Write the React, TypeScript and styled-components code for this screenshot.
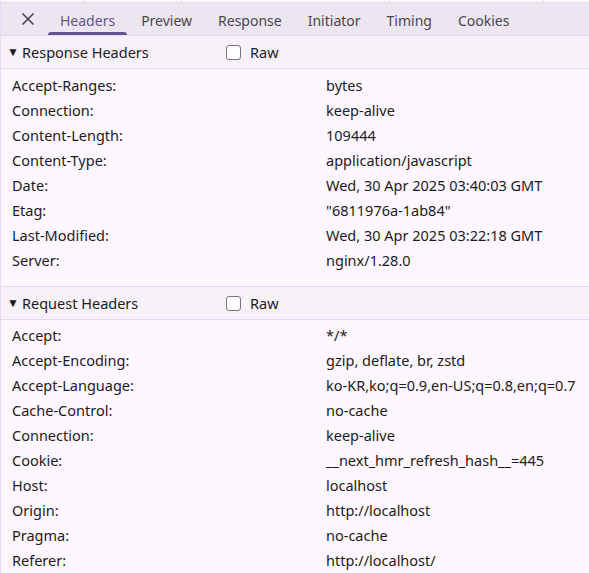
import React from "react";
import styled, {createGlobalStyle} from "styled-components";

const GlobalStyle = createGlobalStyle`
    html, body {
        margin: 0;
        padding: 0;
        background: #fef7ff;
    }
    body {
        font-family: "Noto Sans", "Open Sans", sans-serif;
        color: #1d1b20;
    }
`;

const Panel = styled.main`
    width: 589px;
    height: 573px;
    overflow: hidden;
    background: #fef7ff;
    border-left: 1px solid #e6dcf7;
    box-sizing: border-box;
`;

const TopStrip = styled.div`
    height: 2px;
    display: flex;
    border-bottom: 1px solid #e3d9f5;
    background: #fef7ff;
`;

const StripCell = styled.div<{ $w: number }>`
    width: ${p => p.$w}px;
    border-right: 1px solid #e3d9f5;
    flex-shrink: 0;
`;

const TabBar = styled.nav`
    height: 32px;
    display: flex;
    align-items: stretch;
    background: #ece6f0;
    border-bottom: 1px solid #e3d9f5;
    padding-left: 18px;
`;

const CloseButton = styled.button`
    width: 18px;
    border: none;
    background: none;
    padding: 0;
    margin-right: 10px;
    display: flex;
    align-items: center;
    justify-content: center;
    color: #49454f;
    cursor: pointer;
`;

const Tab = styled.div<{ $active?: boolean }>`
    position: relative;
    padding: 3px 13px 0;
    display: flex;
    align-items: center;
    font-size: 14px;
    color: ${p => p.$active ? "#65558f" : "#49454f"};

    &::after {
        content: "";
        display: ${p => p.$active ? "block" : "none"};
        position: absolute;
        left: 1px;
        right: 1px;
        bottom: 0;
        height: 3px;
        border-radius: 3px 3px 0 0;
        background: #65558f;
    }
`;

const SectionHeader = styled.div`
    height: 32px;
    display: flex;
    align-items: center;
    background: #f7f2fa;
    border-bottom: 1px solid #e3d9f5;
    padding-left: 6px;
    font-size: 14.5px;
`;

const SectionTitle = styled.div`
    width: 219px;
    display: flex;
    align-items: center;
    gap: 3px;
`;

const Arrow = styled.span`
    font-size: 12px;
    width: 12px;
    line-height: 1;
`;

const RawToggle = styled.label`
    display: flex;
    align-items: center;
    gap: 9px;
`;

const Box = styled.span`
    width: 13px;
    height: 13px;
    border: 1px solid #767676;
    border-radius: 3px;
    background: #fff;
`;

const Rows = styled.div<{ $top: number; $bottom: number }>`
    padding: ${p => p.$top}px 0 ${p => p.$bottom}px;
    border-bottom: 1px solid #e3d9f5;
`;

const Row = styled.div`
    height: 25px;
    display: grid;
    grid-template-columns: 315px 1fr;
    align-items: center;
    padding-left: 11px;
    font-size: 14.5px;
    white-space: nowrap;
`;

const Name = styled.span`
    color: #1d1b20;
`;

const Value = styled.span`
    color: #1d1b20;
    margin-left: -1px;
`;

const response: [string, string][] = [
    ["Accept-Ranges:", "bytes"],
    ["Connection:", "keep-alive"],
    ["Content-Length:", "109444"],
    ["Content-Type:", "application/javascript"],
    ["Date:", "Wed, 30 Apr 2025 03:40:03 GMT"],
    ["Etag:", "\"6811976a-1ab84\""],
    ["Last-Modified:", "Wed, 30 Apr 2025 03:22:18 GMT"],
    ["Server:", "nginx/1.28.0"],
];

const request: [string, string][] = [
    ["Accept:", "*/*"],
    ["Accept-Encoding:", "gzip, deflate, br, zstd"],
    ["Accept-Language:", "ko-KR,ko;q=0.9,en-US;q=0.8,en;q=0.7"],
    ["Cache-Control:", "no-cache"],
    ["Connection:", "keep-alive"],
    ["Cookie:", "__next_hmr_refresh_hash__=445"],
    ["Host:", "localhost"],
    ["Origin:", "http://localhost"],
    ["Pragma:", "no-cache"],
    ["Referer:", "http://localhost/"],
];

const tabs = ["Headers", "Preview", "Response", "Initiator", "Timing", "Cookies"];

function Section(props: { title: string; rows: [string, string][]; top: number; bottom: number }) {
    return <>
        <SectionHeader>
            <SectionTitle>
                <Arrow>▼</Arrow>
                {props.title}
            </SectionTitle>
            <RawToggle>
                <Box/>
                Raw
            </RawToggle>
        </SectionHeader>
        <Rows $top={props.top} $bottom={props.bottom}>
            {props.rows.map(([k, v]) => (
                <Row key={k}>
                    <Name>{k}</Name>
                    <Value>{v}</Value>
                </Row>
            ))}
        </Rows>
    </>;
}

export default function App(): React.ReactElement {
    return <>
        <GlobalStyle/>
        <Panel>
            <TopStrip>
                <StripCell $w={82}/>
                <StripCell $w={97}/>
                <StripCell $w={207}/>
                <StripCell $w={153}/>
            </TopStrip>
            <TabBar>
                <CloseButton aria-label="Close">
                    <svg width="14" height="14" viewBox="0 0 14 14">
                        <path d="M1.5 1.5 L12.5 12.5 M12.5 1.5 L1.5 12.5" stroke="#49454f" strokeWidth="1.6"/>
                    </svg>
                </CloseButton>
                {tabs.map((t, i) => <Tab key={t} $active={i === 0}>{t}</Tab>)}
            </TabBar>
            <Section title="Response Headers" rows={response} top={3} bottom={14}/>
            <Section title="Request Headers" rows={request} top={2} bottom={8}/>
        </Panel>
    </>;
}
